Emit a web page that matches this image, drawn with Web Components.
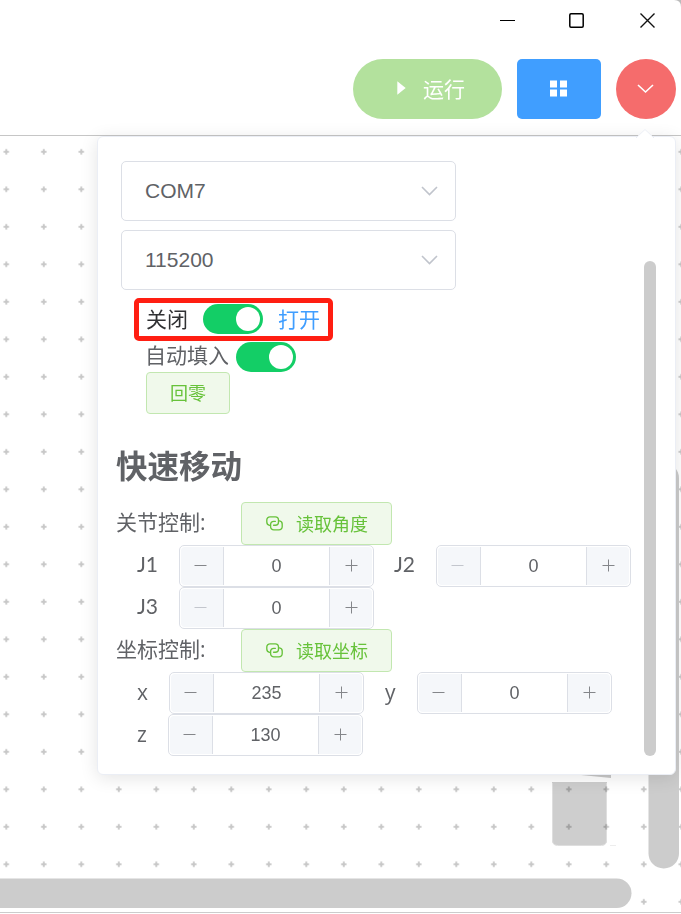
<!DOCTYPE html>
<html lang="zh-CN"><head><meta charset="utf-8"><title>运行</title>
<style>html,body{margin:0;height:914px;overflow:hidden;background:#fff}</style></head>
<body><robot-app></robot-app>
<script>
const define = (name, html) => customElements.define(name, class extends HTMLElement {
  connectedCallback() {
    if (this.shadowRoot) return;
    const t = document.createElement('template');
    t.innerHTML = typeof html === 'function' ? html(this) : html;
    this.attachShadow({mode: 'open'}).append(t.content.cloneNode(true));
  }
});

define('window-controls', `
<style>:host{display:flex;justify-content:flex-end;align-items:flex-start;height:59px;padding-right:25px;box-sizing:border-box}
svg{display:block;margin-top:12px}svg+svg{margin-left:52px}svg:last-child{margin-left:54px}</style>
<svg width="17" height="17" viewBox="0 0 17 17"><path d="M1 8.5h15" stroke="#000"/></svg>
<svg width="17" height="17" viewBox="0 0 17 17"><rect x="1.8" y="1.8" width="13.4" height="13.4" rx="1.2" fill="none" stroke="#000" stroke-width="1.5"/></svg>
<svg width="17" height="17" viewBox="0 0 17 17"><path d="M1.5 1.5l14 14m0-14l-14 14" stroke="#111" stroke-width="1.4"/></svg>`);

define('tool-button', `
<style>:host{display:flex;align-items:center;justify-content:center;height:60px;box-sizing:border-box;color:#fff;font-size:21px;flex:none}
:host([kind=run]){width:149px;border-radius:30px;background:#b3e19d;gap:17px;padding:0 0 3px 7px}
:host([kind=grid]){width:84px;border-radius:5px;background:#409eff;padding:0 1px 2px 0}
:host([kind=more]){width:60px;border-radius:50%;background:#f56c6c;padding-right:2px}</style><slot></slot>`);

define('drop-select', `
<style>:host{display:flex;align-items:center;justify-content:space-between;width:335px;height:60px;box-sizing:border-box;border:1px solid #dcdfe6;border-radius:5px;padding:0 17px 0 23px;background:#fff;font:21px "Liberation Sans",Arial,sans-serif;color:#606266}
svg{display:block}</style>
<slot></slot><svg width="17" height="10" viewBox="0 0 17 10"><path d="M1 1l7.5 7.5L16 1" fill="none" stroke="#c0c4cc" stroke-width="1.6"/></svg>`);

define('toggle-switch', `
<style>:host{display:flex;justify-content:flex-end;align-items:center;width:60px;height:30px;border-radius:15px;background:#13ce66;padding-right:3px;box-sizing:border-box;flex:none}
i{width:24px;height:24px;border-radius:50%;background:#fff}</style><i></i>`);

define('plain-button', `
<style>:host{display:inline-flex;align-items:center;justify-content:center;box-sizing:border-box;height:42px;padding:0 23px;border:1px solid #c2e7b0;border-radius:4px;background:#f0f9eb;color:#67c23a;font-size:18px;line-height:24px;gap:13px;flex:none}
:host([wide]){width:151px;height:43px;padding:0 22px 0 23px}</style><slot></slot>`);

define('link-icon', `
<style>:host{display:block}svg{display:block}</style>
<svg width="17" height="15" viewBox="0 0 17 15"><g fill="none" stroke="#67c23a" stroke-width="1.35" stroke-linecap="round"><path d="M3.6 9.3A3.2 3.2 0 0 1 .8 6.1V4A3.2 3.2 0 0 1 4 .8H9.3A3.2 3.2 0 0 1 12.5 4V6A3.2 3.2 0 0 1 9.3 9.2H7.6"/><path d="M13.4 4.9A3.2 3.2 0 0 1 16.2 8.1V10.7A3.2 3.2 0 0 1 13 13.9H7.8A3.2 3.2 0 0 1 4.6 10.7V8.5A3.2 3.2 0 0 1 7.8 5.3H9.4"/></g></svg>`);

define('number-input', el => `
<style>:host{display:flex;box-sizing:border-box;width:195px;height:42px;border:1px solid #dcdfe6;border-radius:5px;background:#fff;padding:1px;flex:none}
button{all:unset;display:grid;place-items:center;width:42px;background:#f5f7fa;color:#84868a}
.minus{border-right:1px solid #dcdfe6;border-radius:4px 0 0 4px}.plus{border-left:1px solid #dcdfe6;border-radius:0 4px 4px 0}
:host([min]) .minus{color:#c3c6cd}
svg{display:block;margin-bottom:1px}
.minus svg{margin-right:3px}
span{flex:1;text-align:center;font:18px/38px "Liberation Sans",Arial,sans-serif;color:#606266}</style>
<button class="minus" aria-label="-"><svg width="13" height="13"><path d="M.5 6.5h12" stroke="currentColor"/></svg></button>
<span>${el.getAttribute('value')}</span>
<button class="plus" aria-label="+"><svg width="13" height="13"><path d="M.5 6.5h12M6.5.5v12" stroke="currentColor"/></svg></button>`);

define('settings-panel', `
<style>
:host{display:block;box-sizing:border-box;width:579px;height:639px;padding:24px 0 0 18px;border:1px solid #ebeef5;border-radius:6px;background:#fff;box-shadow:0 3px 18px rgba(0,0,0,.11);color:#606266;font-size:21px;line-height:30px}
.arrow{position:absolute;top:-8px;right:21px}
.selects{display:grid;gap:9px;padding-left:5px}
.row{display:flex;align-items:center}
.switch{height:30px;padding-left:29px}
.first{margin-top:14px;gap:15px;color:#303133;padding-left:30px}
.second{margin-top:8px;gap:7px}
.on{color:#409eff}
.home{padding-left:30px;height:42px}
h3{margin:33px 0 0;font-size:31.5px;line-height:38px;font-weight:700}
.heading{height:43px}.heading span{width:125px;margin-top:-4px}
.fields{height:42px;padding-left:21px}
.fields span{padding-bottom:3px}
.joint span{font-family:Lato,"Open Sans",sans-serif;padding-bottom:5px}
.bar{position:absolute;left:546px;top:124px;width:12px;height:495px;border-radius:6px;background:#ccc}
.mark{position:absolute;left:36px;top:161px;width:199px;height:43px;box-sizing:border-box;border:5px solid #ff1e12;border-radius:5px}
</style>
<svg class="arrow" width="18" height="10" viewBox="0 0 18 10"><path d="M0 9L9 0l9 9v1H0z" fill="#fff"/><path d="M0 9L9 .5 18 9" fill="none" stroke="#ebeef5"/></svg>
<div class="selects"><drop-select>COM7</drop-select><drop-select>115200</drop-select></div>
<div class="row switch first"><span>关闭</span><toggle-switch></toggle-switch><span class="on">打开</span></div>
<div class="row switch second"><span style="margin-top:-5px">自动填入</span><toggle-switch></toggle-switch></div>
<div class="home"><plain-button>回零</plain-button></div>
<h3>快速移动</h3>
<div class="row heading" style="margin-top:17px"><span>关节控制:</span><plain-button wide><link-icon></link-icon>读取角度</plain-button></div>
<div class="row fields joint"><span style="width:42px">J1</span><number-input value="0"></number-input><span style="width:42px;padding-left:20px">J2</span><number-input min value="0"></number-input></div>
<div class="row fields joint"><span style="width:42px">J3</span><number-input min value="0"></number-input></div>
<div class="row heading"><span>坐标控制:</span><plain-button wide><link-icon></link-icon>读取坐标</plain-button></div>
<div class="row fields"><span style="width:32px">x</span><number-input value="235"></number-input><span style="width:32px;padding-left:21px">y</span><number-input value="0"></number-input></div>
<div class="row fields"><span style="width:31px">z</span><number-input value="130"></number-input></div>
<div class="bar"></div><div class="mark"></div>`);

define('work-canvas', `
<style>:host{display:block;flex:1;overflow:hidden}svg{display:block}</style>
<svg width="681" height="778" viewBox="0 136 681 778">
<defs><pattern id="p" x="-12.45" y="133.05" width="37.5" height="37.5" patternUnits="userSpaceOnUse"><path d="M16.1 18.75h5.3M18.75 16.1v5.3" stroke="#c8c8c8" stroke-width="1.9"/></pattern></defs>
<path d="M571 774l40 1v3z" fill="#c8c8c8"/>
<path d="M552 782h55v58q0 5-5 5h-45q-5 0-5-5z" fill="#cecece"/>
<path d="M552.5 783v57q0 5.5 5 5.5h44q5 0 5-5.5v-57" fill="none" stroke="#dedede"/>
<path d="M610 845.5h6" stroke="#ededed"/>
<rect y="136" width="681" height="778" fill="url(#p)" style="mix-blend-mode:multiply"/>
<rect x="648.5" y="463" width="30.5" height="405.5" rx="15" fill="#ccc"/>
<rect x="-30" y="878.5" width="661.5" height="29.5" rx="14.75" fill="#ccc"/>
<path d="M0 912.5h681" stroke="#ccc"/>
</svg>`);

define('robot-app', `
<style>:host{display:flex;flex-direction:column;position:relative;width:681px;height:914px;overflow:hidden;background:#fff;font-family:"Open Sans","Noto Sans CJK SC",sans-serif;font-weight:400}
header{height:136px;box-sizing:border-box;border-bottom:1px solid #c6c6c6;flex:none}
.tools{display:flex;justify-content:flex-end;gap:15px;padding-right:5px}
svg{display:block}
.corner{position:absolute;right:0;top:0}
settings-panel{position:absolute;left:97px;top:136px}</style>
<header><window-controls></window-controls><div class="tools">
<tool-button kind="run"><svg width="9" height="14" viewBox="0 0 9 14"><path d="M.3.2L8.7 7 .3 13.8z" fill="#fff"/></svg><span>运行</span></tool-button>
<tool-button kind="grid"><svg width="17" height="17" viewBox="0 0 17 17"><path d="M0 .5h7v7H0zM10 .5h7v7h-7zM0 9.5h7v7H0zM10 9.5h7v7h-7z" fill="#fff"/></svg></tool-button>
<tool-button kind="more"><svg width="17" height="10" viewBox="0 0 17 10"><path d="M1 1l7.5 7L16 1" fill="none" stroke="#fff" stroke-width="1.6"/></svg></tool-button>
</div></header>
<work-canvas></work-canvas>
<svg class="corner" width="7" height="7" viewBox="0 0 7 7"><path d="M0 0h7v7Q7 0 0 0z" fill="#bbb"/></svg>
<settings-panel></settings-panel>`);
</script></body></html>
